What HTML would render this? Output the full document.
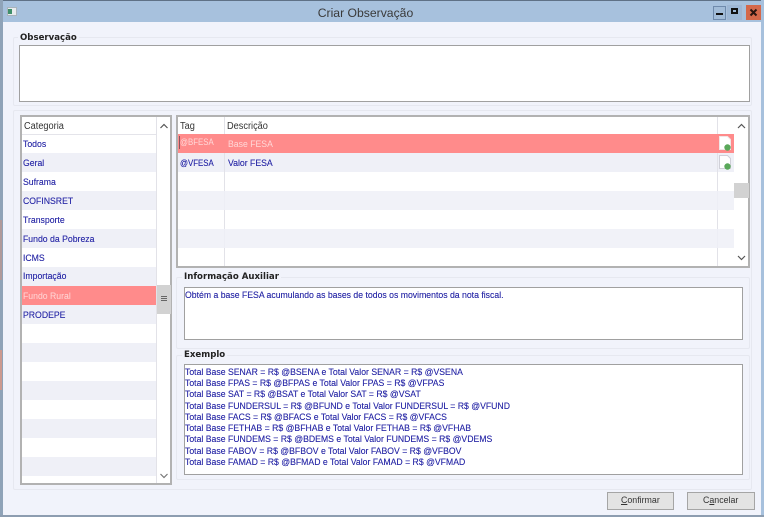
<!DOCTYPE html>
<html><head><meta charset="utf-8"><style>
html,body{margin:0;padding:0;background:#fff}
#w{position:relative;width:764px;height:517px;overflow:hidden;background:#f1f3fb;font-family:"Liberation Sans",sans-serif;font-size:9.6px;color:#3030aa;filter:blur(.35px)}
#w div{position:absolute;box-sizing:border-box;white-space:nowrap}
.lab{font-family:"DejaVu Sans",sans-serif;font-weight:bold;font-size:8.6px;color:#222;background:#f1f3fb;padding:0 2px;line-height:11px;height:11px}
.grp{border:1px solid #e6e8f0;border-radius:2px}
.box{background:#fff;border:1px solid #a0a0a0}
.hd{color:#333;font-size:10px;line-height:12px;transform:scaleX(.92);transform-origin:0 0}
.t{line-height:12px;transform:scaleX(.905);transform-origin:0 0;text-shadow:0 0 .3px currentColor}
.sel{color:#ffd8d8;text-shadow:none}
.btn{background:#e3e3e3;border:1px solid #a5a5a5}
.bt{color:#333;font-size:9.6px;line-height:12px;transform:scaleX(.92);transform-origin:0 0}
</style></head><body><div id="w">
<div style="left:0;top:0;width:764px;height:22px;background:#a7c1dd"></div>
<div style="left:0;top:0;width:764px;height:1px;background:#5f7186"></div>
<div style="left:0;top:0;width:3px;height:517px;background:#8fa3b8"></div>
<div style="left:0;top:220px;width:2px;height:60px;background:#b09a9a"></div>
<div style="left:0;top:350px;width:2px;height:40px;background:#cc9a90"></div>
<div style="left:761px;top:0;width:3px;height:517px;background:#a7c1dd"></div>
<div style="left:0;top:515px;width:764px;height:2px;background:#8d9db0"></div>
<div style="left:7px;top:7px;width:10px;height:9px;background:#e8ecee;border:1px solid #a9b3bc"></div>
<div style="left:8px;top:9px;width:4px;height:5px;background:#3f8f6a"></div>
<div style="left:0;top:6px;width:731px;text-align:center;font-size:12.2px;line-height:15px;color:#3a3a3a">Criar Observação</div>
<div style="left:713px;top:6px;width:13px;height:14px;background:#a2bcd8;border:1px solid #6f8aac"></div>
<div style="left:716px;top:13px;width:7px;height:2px;background:#111"></div>
<div style="left:727px;top:5px;width:15px;height:15px;background:#9db8d6;border:1px solid #a0b6d2"></div>
<div style="left:731px;top:8px;width:7px;height:6px;border:2px solid #111"></div>
<div style="left:746px;top:5px;width:15px;height:15px;background:#d4684a"></div>
<svg style="position:absolute;left:746px;top:5px" width="15" height="15"><path d="M4.5 4.5 L10.5 10.5 M10.5 4.5 L4.5 10.5" fill="none" stroke="#2a1510" stroke-width="2"/></svg>

<div class="grp" style="left:13px;top:37px;width:739px;height:69px"></div>
<div class="lab" style="left:18px;top:33px">Observação</div>
<div class="box" style="left:19px;top:45px;width:731px;height:57px"></div>

<div class="grp" style="left:13px;top:110px;width:739px;height:380px"></div>

<!-- list -->
<div class="box" style="left:20px;top:115px;width:152px;height:370px;border:2px solid #b2b2b2;background:#fff"></div>
<div class="hd" style="left:24px;top:121px">Categoria</div>
<div style="left:22px;top:134px;width:134px;height:1px;background:#e4e4ea"></div>
<div style="left:22px;top:153px;width:134px;height:19px;background:#eff0f7"></div>
<div style="left:22px;top:191px;width:134px;height:19px;background:#eff0f7"></div>
<div style="left:22px;top:229px;width:134px;height:19px;background:#eff0f7"></div>
<div style="left:22px;top:267px;width:134px;height:19px;background:#eff0f7"></div>
<div style="left:22px;top:286px;width:134px;height:19px;background:#ff8b8b"></div>
<div style="left:22px;top:305px;width:134px;height:19px;background:#eff0f7"></div>
<div style="left:22px;top:343px;width:134px;height:19px;background:#eff0f7"></div>
<div style="left:22px;top:381px;width:134px;height:19px;background:#eff0f7"></div>
<div style="left:22px;top:419px;width:134px;height:19px;background:#eff0f7"></div>
<div style="left:22px;top:457px;width:134px;height:19px;background:#eff0f7"></div>
<div class="t" style="left:23px;top:139px">Todos</div>
<div class="t" style="left:23px;top:158px">Geral</div>
<div class="t" style="left:23px;top:177px">Suframa</div>
<div class="t" style="left:23px;top:196px">COFINSRET</div>
<div class="t" style="left:23px;top:215px">Transporte</div>
<div class="t" style="left:23px;top:234px">Fundo da Pobreza</div>
<div class="t" style="left:23px;top:253px">ICMS</div>
<div class="t" style="left:23px;top:271px">Importação</div>
<div class="t sel" style="left:23px;top:291px">Fundo Rural</div>
<div class="t" style="left:23px;top:310px">PRODEPE</div>
<div style="left:156px;top:117px;width:1px;height:366px;background:#e2e2e8"></div>
<svg style="position:absolute;left:157px;top:119px" width="14" height="14"><path d="M3.5 9 L7 5.5 L10.5 9" fill="none" stroke="#555" stroke-width="1.2"/></svg>
<svg style="position:absolute;left:157px;top:469px" width="14" height="14"><path d="M3.5 5 L7 8.5 L10.5 5" fill="none" stroke="#777" stroke-width="1.2"/></svg>
<div style="left:157px;top:285px;width:14px;height:29px;background:#d2d2d2"></div>
<div style="left:161px;top:296px;width:6px;height:1px;background:#666"></div>
<div style="left:161px;top:298px;width:6px;height:1px;background:#666"></div>
<div style="left:161px;top:300px;width:6px;height:1px;background:#666"></div>

<!-- grid -->
<div class="box" style="left:176px;top:115px;width:574px;height:153px;border:2px solid #b2b2b2"></div>
<div style="left:224px;top:117px;width:1px;height:149px;background:#e2e2e8"></div>
<div style="left:717px;top:117px;width:1px;height:149px;background:#e2e2e8"></div>
<div style="left:178px;top:134px;width:556px;height:19px;background:#ff8b8b"></div>
<div style="left:178px;top:153px;width:556px;height:19px;background:#eff0f7"></div>
<div style="left:224px;top:153px;width:1px;height:19px;background:#e2e2e8"></div>
<div style="left:717px;top:153px;width:1px;height:19px;background:#e2e2e8"></div>
<div style="left:178px;top:191px;width:556px;height:19px;background:rgba(239,240,247,.85)"></div>
<div style="left:178px;top:229px;width:556px;height:19px;background:rgba(239,240,247,.85)"></div>
<div class="hd" style="left:180px;top:121px">Tag</div>
<div class="hd" style="left:227px;top:121px">Descrição</div>
<div style="left:179px;top:136px;width:1px;height:13px;background:#8a5560"></div>
<div class="t sel" style="left:180px;top:137px;transform:scaleX(.82)">@BFESA</div>
<div class="t sel" style="left:228px;top:139px">Base FESA</div>
<div class="t" style="left:180px;top:158px;transform:scaleX(.82)">@VFESA</div>
<div class="t" style="left:228px;top:158px">Valor FESA</div>
<svg style="position:absolute;left:718px;top:135px" width="15" height="17"><path d="M1.5 1.5H9.5L12.5 4.5V14.5H1.5Z" fill="#fff" stroke="#f0e6e6"/><circle cx="9.5" cy="12.5" r="3.2" fill="#5aa85a"/></svg>
<svg style="position:absolute;left:718px;top:154px" width="15" height="17"><path d="M1.5 1.5H9.5L12.5 4.5V14.5H1.5Z" fill="#fff" stroke="#d0d0d8"/><circle cx="9.5" cy="12.5" r="3.2" fill="#5aa85a"/></svg>
<svg style="position:absolute;left:734px;top:119px" width="15" height="14"><path d="M4 9 L7.5 5.5 L11 9" fill="none" stroke="#555" stroke-width="1.2"/></svg>
<svg style="position:absolute;left:734px;top:251px" width="15" height="14"><path d="M4 5 L7.5 8.5 L11 5" fill="none" stroke="#555" stroke-width="1.2"/></svg>
<div style="left:734px;top:183px;width:15px;height:15px;background:#d2d2d2"></div>

<!-- info -->
<div class="grp" style="left:176px;top:277px;width:574px;height:72px"></div>
<div class="lab" style="left:182px;top:272px">Informação Auxiliar</div>
<div class="box" style="left:184px;top:287px;width:559px;height:53px"></div>
<div class="t" style="left:185px;top:290px">Obtém a base FESA acumulando as bases de todos os movimentos da nota fiscal.</div>

<!-- example -->
<div class="grp" style="left:176px;top:355px;width:574px;height:125px"></div>
<div class="lab" style="left:182px;top:350px">Exemplo</div>
<div class="box" style="left:184px;top:364px;width:559px;height:111px"></div>
<div class="t" style="left:185px;top:367px">Total Base SENAR = R$ @BSENA e Total Valor SENAR = R$ @VSENA</div>
<div class="t" style="left:185px;top:378px">Total Base FPAS = R$ @BFPAS e Total Valor FPAS = R$ @VFPAS</div>
<div class="t" style="left:185px;top:389px">Total Base SAT = R$ @BSAT e Total Valor SAT = R$ @VSAT</div>
<div class="t" style="left:185px;top:401px">Total Base FUNDERSUL = R$ @BFUND e Total Valor FUNDERSUL = R$ @VFUND</div>
<div class="t" style="left:185px;top:412px">Total Base FACS = R$ @BFACS e Total Valor FACS = R$ @VFACS</div>
<div class="t" style="left:185px;top:423px">Total Base FETHAB = R$ @BFHAB e Total Valor FETHAB = R$ @VFHAB</div>
<div class="t" style="left:185px;top:434px">Total Base FUNDEMS = R$ @BDEMS e Total Valor FUNDEMS = R$ @VDEMS</div>
<div class="t" style="left:185px;top:446px">Total Base FABOV = R$ @BFBOV e Total Valor FABOV = R$ @VFBOV</div>
<div class="t" style="left:185px;top:457px">Total Base FAMAD = R$ @BFMAD e Total Valor FAMAD = R$ @VFMAD</div>

<div class="btn" style="left:607px;top:492px;width:67px;height:18px"></div>
<div class="bt" style="left:621px;top:495px"><u>C</u>onfirmar</div>
<div class="btn" style="left:687px;top:492px;width:68px;height:18px"></div>
<div class="bt" style="left:703px;top:495px">C<u>a</u>ncelar</div>
</div></body></html>
